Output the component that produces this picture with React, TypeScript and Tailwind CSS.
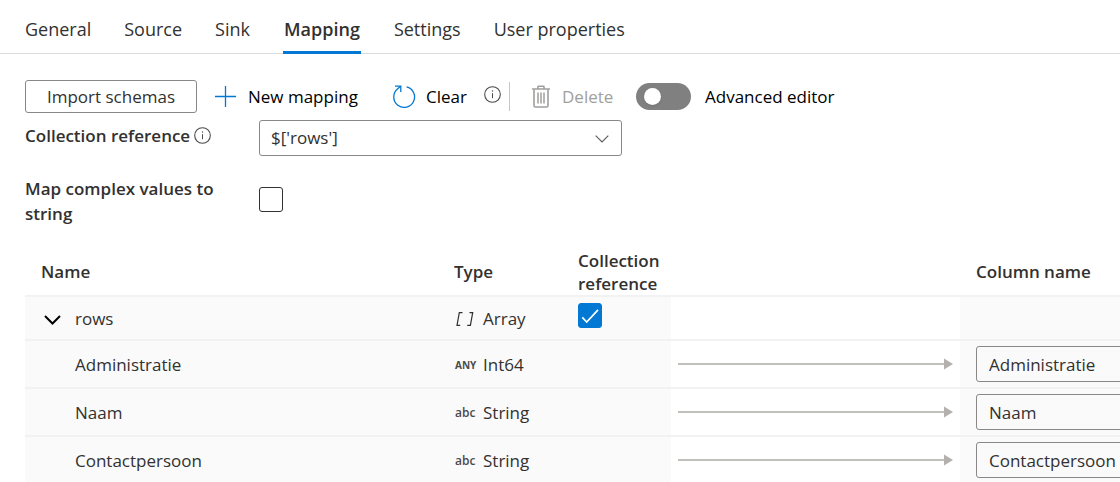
import { useState } from 'react';

const tabs = ['General', 'Source', 'Sink', 'Mapping', 'Settings', 'User properties'];

type Field = { name: string; kind: 'any' | 'abc'; type: string };

const fields: Field[] = [
  { name: 'Administratie', kind: 'any', type: 'Int64' },
  { name: 'Naam', kind: 'abc', type: 'String' },
  { name: 'Contactpersoon', kind: 'abc', type: 'String' },
];

function InfoIcon() {
  return (
    <svg className="size-[17px] shrink-0" viewBox="0 0 17 17" fill="none" aria-hidden="true">
      <circle cx="8.5" cy="8.5" r="7.8" stroke="#4a4a4a" strokeWidth="1.1" />
      <path d="M8.5 7.2v5" stroke="#4a4a4a" strokeWidth="1" />
      <circle cx="8.5" cy="5" r="0.7" fill="#4a4a4a" />
    </svg>
  );
}

function PlusIcon() {
  return (
    <svg className="size-[21px] shrink-0" viewBox="0 0 21 21" fill="none" aria-hidden="true">
      <path d="M10.5 0v21M0 10.5h21" stroke="#0078d4" strokeWidth="1.3" />
    </svg>
  );
}

function ResetIcon() {
  return (
    <svg className="size-6 shrink-0" viewBox="0 0 24 24" fill="none" stroke="#0078d4" strokeWidth="1.3" aria-hidden="true">
      <path d="M14.6 1.9A10.4 10.4 0 1 1 5.4 4.1L8.6 1.3" />
      <path d="M3 1.2h5.8v5.8" />
    </svg>
  );
}

function TrashIcon() {
  return (
    <svg className="h-6 w-[18px] shrink-0" viewBox="0 0 18 24" fill="none" stroke="#a19f9d" strokeWidth="1.6" aria-hidden="true">
      <path d="M0 4h18M6 4V1.8q0-.6.6-.6h4.8q.6 0 .6.6V4" />
      <path d="M2 4.5V20.6q0 1.4 1.4 1.4h11.2q1.4 0 1.4-1.4V4.5" />
      <path d="M6 7.5v11M9 7.5v11M12 7.5v11" strokeWidth="1.5" />
    </svg>
  );
}

function CheckBox({ label, id, initial }: { label?: string; id: string; initial: boolean }) {
  const [checked, setChecked] = useState(initial);
  return (
    <span className="grid h-[25px] w-6 shrink-0">
      <input
        id={id}
        type="checkbox"
        aria-label={label}
        checked={checked}
        onChange={(e) => setChecked(e.target.checked)}
        className="col-start-1 row-start-1 h-[25px] w-6 appearance-none rounded-[3px] border border-[#323130] bg-white checked:border-[#0078d4] checked:bg-[#0078d4]"
      />
      {checked && (
        <svg className="pointer-events-none col-start-1 row-start-1 h-[25px] w-6" viewBox="0 0 24 25" fill="none" aria-hidden="true">
          <path d="M4.3 14.4l4.4 4.6L20 6.8" stroke="white" strokeWidth="1.7" />
        </svg>
      )}
    </span>
  );
}

function Arrow() {
  return (
    <span className="flex items-center px-[7px]">
      <span className="h-[2px] flex-1 bg-[#c0c0bd]" />
      <svg className="h-3 w-[9px]" viewBox="0 0 9 12" aria-hidden="true">
        <path d="M0 0.5L9 6L0 11.5z" fill="#b3b0ad" />
      </svg>
    </span>
  );
}

const cell = 'border-b-2 border-[#f2f2f2] bg-[#fafafa] p-0';
const textCell = 'border-b-2 border-[#f2f2f2] bg-[#fafafa] p-0 pt-[2px]';
const gapCell = 'border-b-2 border-[#f2f2f2] p-0';
const head = 'border-b-2 border-[#f2f2f2] p-0 text-left font-semibold';

export default function App() {
  const [active, setActive] = useState('Mapping');
  const [advanced, setAdvanced] = useState(false);

  return (
    <main className="h-screen overflow-hidden bg-white font-['Open_Sans','Noto_Sans',sans-serif] text-[17px] leading-6 text-[#323130]">
      <div role="tablist" className="flex gap-[33px] border-b border-[#dcdcdc] pl-[25px]">
        {tabs.map((tab) => (
          <button
            key={tab}
            role="tab"
            aria-selected={tab === active}
            onClick={() => setActive(tab)}
            className={
              tab === active
                ? '-mb-px border-b-[3px] border-[#0078d4] px-px pt-[17px] pb-[10px] text-lg leading-6 font-semibold'
                : '-mb-px border-b-[3px] border-transparent pt-[17px] pb-[10px] text-lg leading-6'
            }
          >
            {tab}
          </button>
        ))}
      </div>

      <div className="mt-[26px] flex h-[33px] items-center pl-[25px] text-black">
        <button className="h-full w-[172px] rounded-[3px] border border-[#8a8886] text-[#323130]">Import schemas</button>
        <button className="ml-[18px] flex w-[145px] items-center gap-3 whitespace-nowrap">
          <PlusIcon />
          New mapping
        </button>
        <button className="ml-8 flex w-[76px] items-center gap-[10px]">
          <ResetIcon />
          Clear
        </button>
        <span className="ml-4 pb-1"><InfoIcon /></span>
        <span className="ml-2 h-[29px] w-px bg-[#c8c6c4]" />
        <button disabled className="ml-[22px] flex w-[82px] items-center gap-3 text-[#a19f9d]">
          <TrashIcon />
          Delete
        </button>
        <label className="ml-[22px] flex items-center gap-[14px]">
          <span className="grid items-center">
            <input
              type="checkbox"
              role="switch"
              checked={advanced}
              onChange={(e) => setAdvanced(e.target.checked)}
              className="peer col-start-1 row-start-1 h-[27px] w-[55px] appearance-none rounded-full bg-[#808080] checked:bg-[#0078d4]"
            />
            <span className="pointer-events-none col-start-1 row-start-1 ml-2 size-[17px] rounded-full bg-white shadow-sm peer-checked:ml-8" />
          </span>
          Advanced editor
        </label>
      </div>

      <div className="mt-[7px] grid grid-cols-[234px_363px] items-start pl-[25px]">
        <div className="flex items-center gap-1 pt-1">
          <label htmlFor="collection" className="font-semibold">Collection reference</label>
          <span className="pb-[2px]"><InfoIcon /></span>
        </div>
        <div className="grid items-center">
          <select
            id="collection"
            className="col-start-1 row-start-1 h-9 w-full appearance-none rounded-[3px] border border-[#8a8886] bg-white pl-[11px]"
          >
            <option>$['rows']</option>
          </select>
          <svg className="pointer-events-none col-start-1 row-start-1 mt-[2px] mr-[13px] h-2 w-[14px] justify-self-end" viewBox="0 0 14 8" fill="none" aria-hidden="true">
            <path d="M0.7 0.7L7 7L13.3 0.7" stroke="#605e5c" strokeWidth="1.2" />
          </svg>
        </div>
      </div>

      <div className="mt-5 grid grid-cols-[234px_363px] items-center pl-[25px]">
        <label htmlFor="complex" className="w-[210px] leading-[25px] font-semibold">Map complex values to string</label>
        <div className="pb-1">
          <CheckBox id="complex" initial={false} />
        </div>
      </div>

      <div className="overflow-hidden pt-[22px] pl-[25px]">
        <table className="w-full min-w-[1240px] table-fixed border-separate border-spacing-0">
          <colgroup>
            <col className="w-[429px]" />
            <col className="w-[124px]" />
            <col className="w-[93px]" />
            <col className="w-[289px]" />
            <col />
          </colgroup>
          <thead>
            <tr className="h-[49px]">
              <th className={`${head} pl-4`}>Name</th>
              <th className={head}>Type</th>
              <th className={`${head} leading-[23px]`}>Collection reference</th>
              <th className={head} aria-label="Direction" />
              <th className={`${head} pl-4`}>Column name</th>
            </tr>
          </thead>
          <tbody>
            <tr className="h-11">
              <td className={textCell}>
                <button className="ml-[19px] flex items-center gap-[14px]">
                  <svg className="mt-[2px] h-[10px] w-[17px]" viewBox="0 0 17 10" fill="none" aria-hidden="true">
                    <path d="M1 1L8.5 8.5L16 1" stroke="black" strokeWidth="2" />
                  </svg>
                  rows
                </button>
              </td>
              <td className={textCell}>
                <span className="flex items-center">
                  <svg className="mr-[9px] ml-[2px] h-[14px] w-[18px]" viewBox="0 0 18 14" fill="none" stroke="#323130" strokeWidth="1.2" aria-hidden="true">
                    <path d="M6.5 0.6H3.3L1 13.4h3.2M13.5 0.6h3.2L14.4 13.4h-3.2" />
                  </svg>
                  Array
                </span>
              </td>
              <td className={`${cell} pt-[6px] align-top`}>
                <CheckBox id="rows-collection" label="Collection reference for rows" initial={true} />
              </td>
              <td className={gapCell} />
              <td className={cell} />
            </tr>
            {fields.map((field) => (
              <tr key={field.name} className="h-12">
                <td className={`${textCell} pl-[50px]`}>{field.name}</td>
                <td className={textCell}>
                  <span className="flex items-center">
                    <span
                      className={
                        field.kind === 'any'
                          ? 'w-[29px] pl-px text-[10px] font-bold text-[#4a4a4a]'
                          : 'w-[29px] pl-px text-xs font-semibold text-[#4a4a4a]'
                      }
                    >
                      {field.kind === 'any' ? 'ANY' : 'abc'}
                    </span>
                    {field.type}
                  </span>
                </td>
                <td className={cell} />
                <td className={gapCell}><Arrow /></td>
                <td className={`${cell} pl-4`}>
                  <input
                    aria-label={`Column name for ${field.name}`}
                    defaultValue={field.name}
                    className="block h-9 w-[250px] rounded-[3px] border border-[#8a8886] bg-transparent px-3"
                  />
                </td>
              </tr>
            ))}
          </tbody>
        </table>
      </div>
    </main>
  );
}
